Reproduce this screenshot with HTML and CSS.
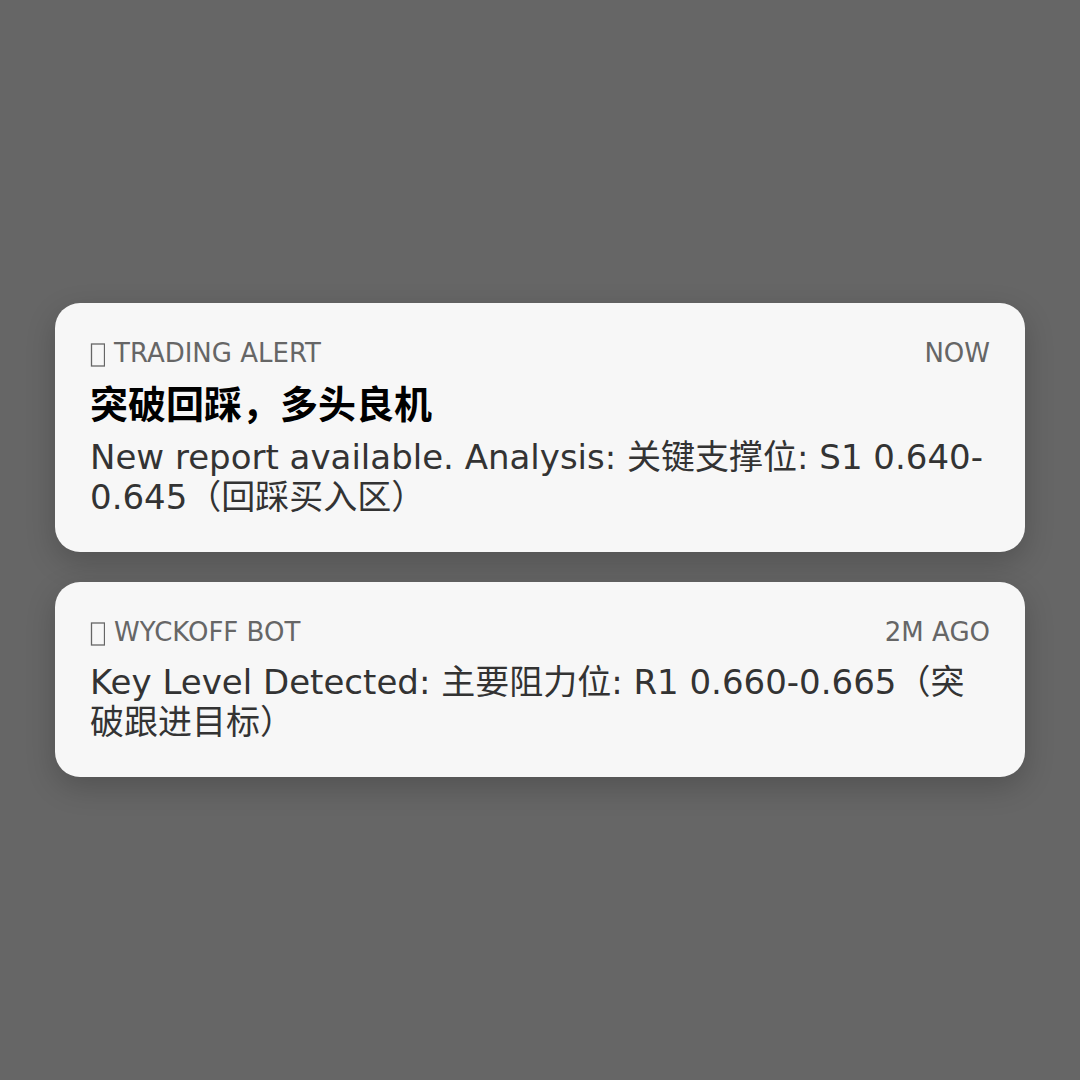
FILE: index.html
```html
<!DOCTYPE html>
<html lang="zh-CN">
<head>
    <meta charset="UTF-8">
    <meta name="viewport" content="width=device-width, initial-scale=1.0">
    <title>Notifications</title>
    <link rel="stylesheet" href="styles.css">
</head>
<body>
    <div class="notification">
        <div class="header">
            <span class="app"><svg class="app-icon" viewBox="0 0 15 30"><rect x="1.5" y="6" width="13" height="22"/></svg>TRADING ALERT</span>
            <span>NOW</span>
        </div>
        <div class="title">突破回踩，多头良机</div>
        <div class="message">New report available. Analysis: 关键支撑位: S1 0.640-0.645（回踩买入区）</div>
    </div>
    <div class="notification">
        <div class="header">
            <span class="app"><svg class="app-icon" viewBox="0 0 15 30"><rect x="1.5" y="6" width="13" height="22"/></svg>WYCKOFF BOT</span>
            <span>2M AGO</span>
        </div>
        <div class="message">Key Level Detected: 主要阻力位: R1 0.660-0.665（突破跟进目标）</div>
    </div>
</body>
</html>
```
FILE: styles.css
```css
* {
    box-sizing: border-box;
}
body {
    margin: 0;
    min-height: 100vh;
    padding: 0 55px;
    display: flex;
    flex-direction: column;
    justify-content: center;
    gap: 30px;
    background: #666666;
    font-family: "DejaVu Sans", "Noto Sans CJK SC", sans-serif;
}
.notification {
    background: #f7f7f7;
    border-radius: 25px;
    padding: 35px;
    box-shadow: 0 10px 30px rgba(0, 0, 0, 0.2);
}
.header {
    display: flex;
    justify-content: space-between;
    padding-bottom: 10px;
    font-size: 26px;
    line-height: 30px;
    color: #666666;
}
.app {
    display: flex;
    align-items: center;
    gap: 9px;
}
.app-icon {
    width: 15px;
    height: 30px;
    fill: none;
    stroke: #666666;
    stroke-width: 1.3;
}
.title {
    font-size: 38px;
    line-height: 54px;
    font-weight: bold;
    color: #000000;
}
.message {
    margin-top: 5px;
    font-size: 34px;
    line-height: 40px;
    color: #333333;
}
```
